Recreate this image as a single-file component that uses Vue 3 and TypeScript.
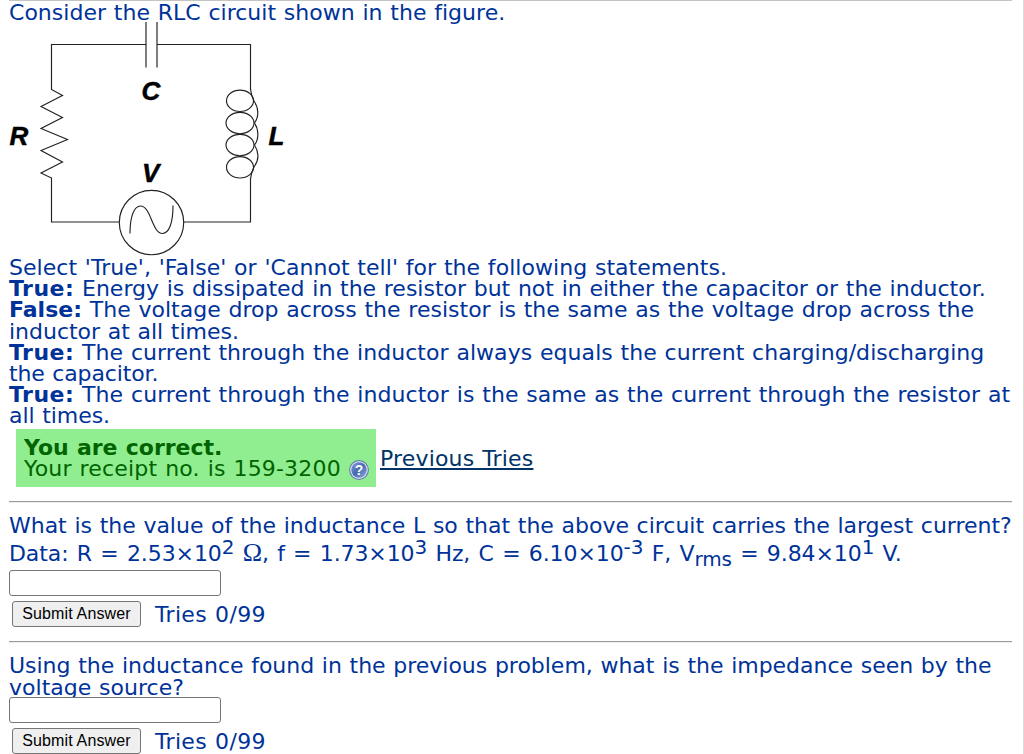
<script setup lang="ts">
import { ref } from 'vue';

interface Line {
  label?: string;
  text: string;
  spacing: number;
}

// letter spacing is tuned per line, in px
const statements: Line[] = [
  { text: "Select 'True', 'False' or 'Cannot tell' for the following statements.", spacing: 0.04 },
  { label: 'True:', text: 'Energy is dissipated in the resistor but not in either the capacitor or the inductor.', spacing: -0.01 },
  { label: 'False:', text: 'The voltage drop across the resistor is the same as the voltage drop across the', spacing: 0.01 },
  { text: 'inductor at all times.', spacing: -0.02 },
  { label: 'True:', text: 'The current through the inductor always equals the current charging/discharging', spacing: 0.05 },
  { text: 'the capacitor.', spacing: -0.13 },
  { label: 'True:', text: 'The current through the inductor is the same as the current through the resistor at', spacing: 0.06 },
  { text: 'all times.', spacing: -0.06 },
];

const inductance = ref('');
const impedance = ref('');
</script>

<template>
  <main class="problem">
    <p class="line intro">Consider the RLC circuit shown in the figure.</p>

    <svg class="circuit" width="290" height="235" viewBox="0 22 290 235">
      <g fill="none" stroke="#222" stroke-width="1.15">
        <path d="M146 22V67.500M157 22V67.500" />
        <path d="M146 44.500H51.500V89.500L62.500 95.500L41 106.500L62.500 117.500L41 128.500L67.500 139.500L41 150.500L62.500 162L41 173L51.500 178V222H119" />
        <path d="M157 44.500H250.500V90M250.500 178V222H184" />
        <ellipse cx="240" cy="100.800" rx="13.500" ry="10.700" />
        <ellipse cx="240" cy="123" rx="14" ry="10.700" />
        <ellipse cx="240" cy="145" rx="14" ry="10.700" />
        <ellipse cx="240" cy="167.300" rx="13.500" ry="10.700" />
        <path d="M250.500 89C251 94 252 97 254 101C259 108 259 117 254.500 123C259 130 259 139 254.500 145C259 152 259 160 254 167C252 171 251 174 250.500 179" />
        <circle cx="151.500" cy="222.500" r="32.200" />
        <path d="M130 233.500C130 214 135 206 140.500 206C151 206 152 233.500 162.500 233.500C169 233.500 173 223 173 205.500" />
      </g>
      <g class="symbols">
        <text x="141.500" y="100">C</text>
        <text x="9.500" y="144.500">R</text>
        <text x="268.500" y="144.500">L</text>
        <text x="142" y="182">V</text>
      </g>
    </svg>

    <p
      v-for="line in statements"
      :key="line.text"
      class="line"
      :style="{ letterSpacing: line.spacing + 'px' }"
    >
      <b v-if="line.label" :class="{ wide: line.label === 'True:' }">{{ line.label }}</b>{{ line.label ? ' ' : '' }}{{ line.text }}
    </p>

    <div class="result">
      <div class="correct">
        <p class="line verdict"><b>You are correct.</b></p>
        <p class="line receipt">
          <span>Your receipt no. is 159-3200</span>
          <svg class="help" width="20" height="20" viewBox="0 0 20 20">
            <defs>
              <linearGradient id="helpFill" x1="0" y1="0" x2="1" y2="1">
                <stop offset="0" stop-color="#829cd2" />
                <stop offset="0.500" stop-color="#4568b0" />
                <stop offset="1" stop-color="#90b0e3" />
              </linearGradient>
            </defs>
            <circle cx="10" cy="10" r="9.900" fill="#6078a5" />
            <circle cx="10" cy="10" r="8.900" fill="#d3def0" />
            <circle cx="10" cy="10" r="7.700" fill="url(#helpFill)" />
            <text x="10" y="15" text-anchor="middle">?</text>
          </svg>
        </p>
      </div>
      <a class="previous" href="#">Previous Tries</a>
    </div>

    <hr class="rule" />

    <section class="question first">
      <p class="line ask">What is the value of the inductance L so that the above circuit carries the largest current?</p>
      <p class="line data">
        Data: R = 2.53×10<sup>2</sup> <span class="ohm">Ω</span>, f = 1.73×10<sup>3</sup> Hz, C = 6.10×10<sup>-3</sup> F, V<sub>rms</sub> = 9.84×10<sup>1</sup> V.
      </p>
      <input v-model="inductance" type="text" class="answer" />
      <div class="submit-row">
        <button type="button">Submit Answer</button>
        <span class="tries">Tries 0/99</span>
      </div>
    </section>

    <hr class="rule" />

    <section class="question second">
      <p class="line using">Using the inductance found in the previous problem, what is the impedance seen by the</p>
      <p class="line voltage">voltage source?</p>
      <input v-model="impedance" type="text" class="answer" />
      <div class="submit-row">
        <button type="button">Submit Answer</button>
        <span class="tries">Tries 0/99</span>
      </div>
    </section>
  </main>
</template>

<style>
html,
body {
  margin: 0;
  overflow: hidden;
  background: #fff;
}
</style>

<style scoped>
.problem {
  height: 754px;
  box-sizing: border-box;
  padding: 1px 11px 0 9px;
  overflow: hidden;
  border-right: 1px solid #dcdcdc;
  background: linear-gradient(#c4c4c4, #c4c4c4) 9px 0 / 1003px 1px no-repeat;
  color: #003399;
  font-family: Verdana, "DejaVu Sans", sans-serif;
  font-size: 22px;
  line-height: 21.2px;
  word-spacing: 0.73px;
}

.line {
  margin: 0;
  height: 21.2px;
  white-space: nowrap;
  letter-spacing: 0.02px;
}

.wide {
  letter-spacing: 0.5px;
}

.circuit {
  display: block;
  margin: -0.2px 0 0 -9px;
}

.intro {
  position: relative;
  top: 1px;
}

.symbols {
  font: italic bold 26px "Liberation Sans", Arial, sans-serif;
  fill: #000;
  stroke: #000;
  stroke-width: 0.5px;
}

.result {
  display: flex;
  height: 58px;
  margin: 2.4px 0 0 7px;
}

.correct {
  width: 360px;
  box-sizing: border-box;
  padding: 8px 8px 0;
  background: #90ee90;
  color: #006400;
}

.verdict {
  letter-spacing: -0.03px;
}

.receipt {
  display: flex;
  align-items: center;
  justify-content: space-between;
  letter-spacing: 0.18px;
}

.help {
  flex: none;
  margin: 0 -1px 0 0;
  position: relative;
  top: 1px;
}

.help text {
  font: bold 14px "Liberation Sans", Arial, sans-serif;
  letter-spacing: 0;
  fill: #fff;
}

.previous {
  margin: 19px 0 0 4px;
  color: #003366;
  letter-spacing: 0.17px;
  text-decoration-thickness: 2px;
  text-underline-offset: 2px;
}

.rule {
  height: 1px;
  margin: 14px 0 0;
  border: 0;
  border-top: 1px solid #9a9a9a;
  background: #eee;
}

.question {
  height: 138px;
  padding-top: 12px;
  box-sizing: border-box;
}

.first + .rule {
  margin-top: 0;
}

.second {
  padding-top: 12.6px;
}

.ask {
  letter-spacing: -0.02px;
}

.data {
  margin-top: 7px;
  letter-spacing: -0.09px;
  word-spacing: 1.4px;
}

.using {
  letter-spacing: -0.02px;
}

sup,
sub {
  font-size: 20px;
  line-height: 0;
}

sup {
  vertical-align: 7px;
}

sub {
  vertical-align: -5px;
}

.ohm {
  font-family: "Liberation Serif", serif;
  font-size: 26px;
  line-height: 0;
}

.answer {
  display: block;
  position: relative;
  width: 212px;
  height: 26px;
  box-sizing: border-box;
  margin: 6px 0 0;
  padding: 1px 4px;
  border: 1px solid #767676;
  border-radius: 3px;
  background: #fff;
}

.second .answer {
  margin-top: -0.6px;
}

.submit-row {
  display: flex;
  align-items: center;
  margin: 5px 0 0 3px;
}

.submit-row button {
  width: 129px;
  height: 26px;
  box-sizing: border-box;
  padding: 0;
  border: 1px solid #767676;
  border-radius: 3px;
  background: #efefef;
  color: #000;
  font: 16px "Liberation Sans", Arial, sans-serif;
  letter-spacing: 0.15px;
}

.tries {
  margin-left: 14px;
  letter-spacing: 0.33px;
}
</style>
